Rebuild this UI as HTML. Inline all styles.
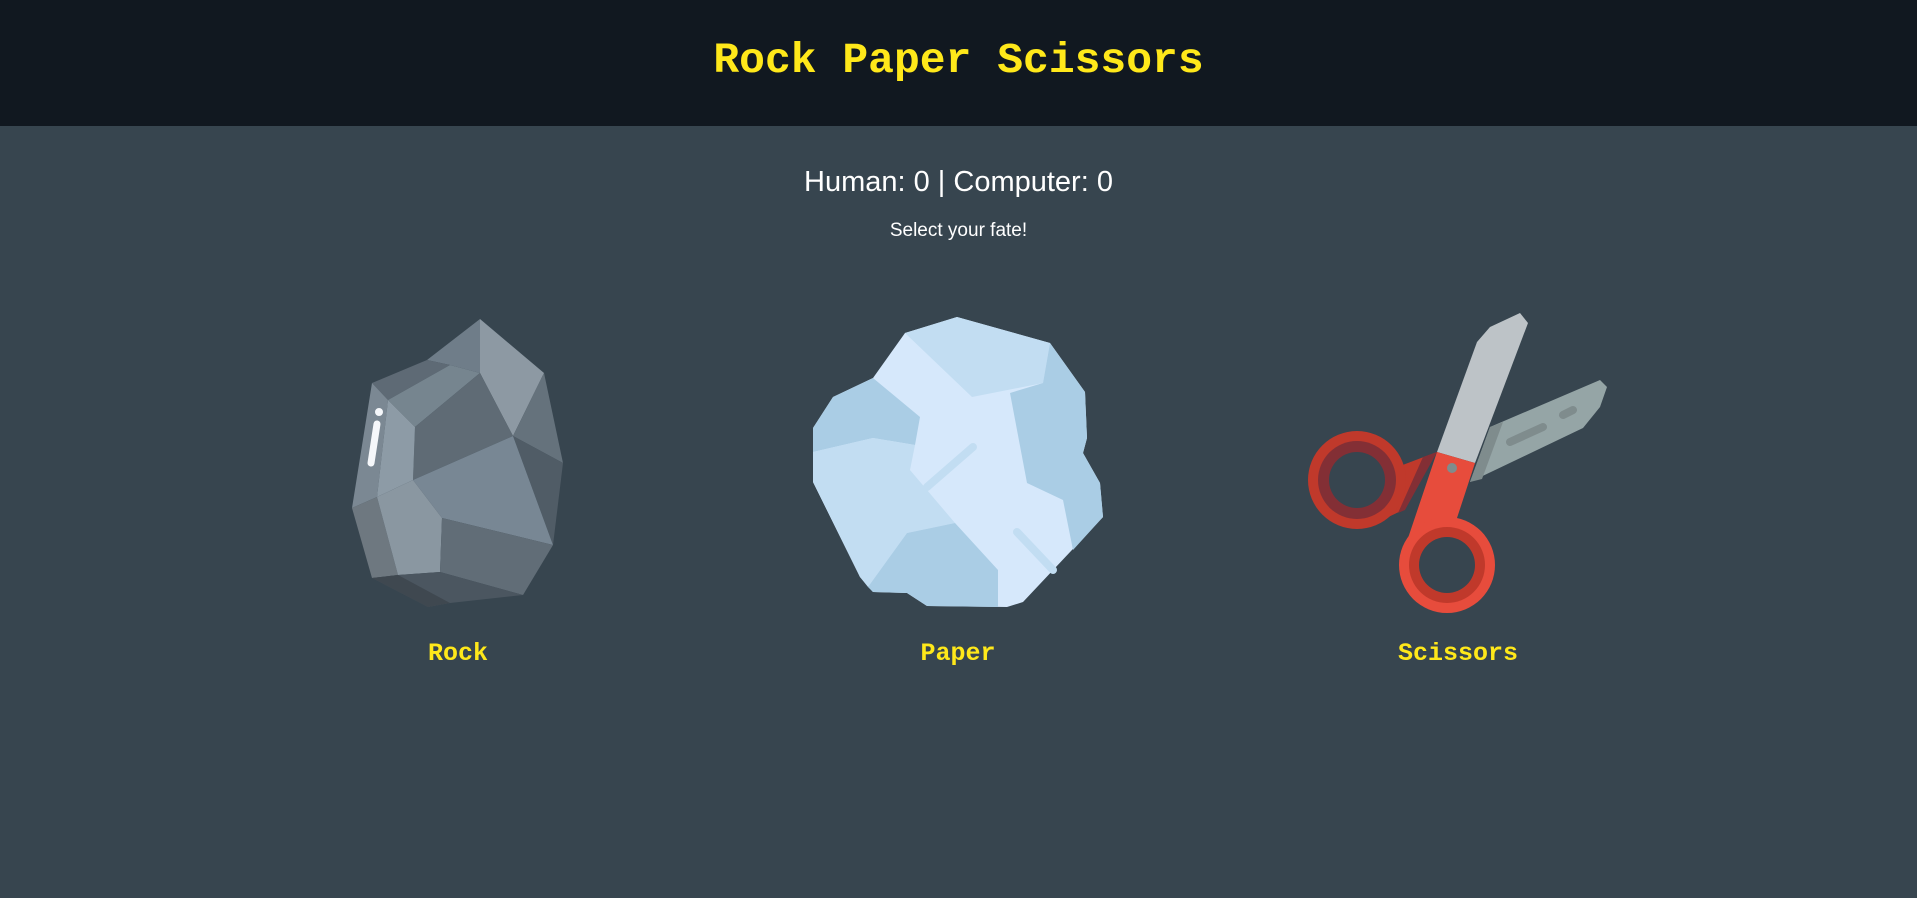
<!DOCTYPE html>
<html><head><meta charset="utf-8"><style>
html,body{margin:0;padding:0;width:1917px;height:898px;overflow:hidden;background:#37454f;font-family:"Liberation Sans",sans-serif}
header{position:absolute;left:0;top:0;width:1917px;height:126px;background:#111820}
.t{position:absolute;left:0;width:1917px;text-align:center;white-space:nowrap}
.px{font-family:"Liberation Mono",monospace;font-weight:bold;color:#ffe81a}
svg{position:absolute;left:0;top:0}
</style></head><body>
<header></header>
<div class="t px" style="top:36px;font-size:43px;line-height:50px">Rock Paper Scissors</div>
<div class="t" style="top:164px;font-size:29px;line-height:36px;color:#fff">Human: 0 | Computer: 0</div>
<div class="t" style="top:219px;font-size:19px;line-height:24px;color:#fff">Select your fate!</div>
<div class="px" style="position:absolute;left:358px;width:200px;text-align:center;top:638px;font-size:25px;line-height:32px">Rock</div>
<div class="px" style="position:absolute;left:858px;width:200px;text-align:center;top:638px;font-size:25px;line-height:32px">Paper</div>
<div class="px" style="position:absolute;left:1358px;width:200px;text-align:center;top:638px;font-size:25px;line-height:32px">Scissors</div>
<svg width="1917" height="898" viewBox="0 0 1917 898">
<!-- rock -->
<polygon points="480,319 544,373 513,436 480,373" fill="#8d99a3"/>
<polygon points="427,360 480,319 480,373 450,365" fill="#6f7d89"/>
<polygon points="372,383 427,360 450,365 388,400" fill="#5e6a75"/>
<polygon points="388,400 450,365 480,373 415,427" fill="#76858f"/>
<polygon points="415,427 480,373 513,436 413,480" fill="#5f6b75"/>
<polygon points="544,373 563,463 513,436" fill="#65727c"/>
<polygon points="513,436 563,463 553,545" fill="#505c66"/>
<polygon points="413,480 513,436 553,545 442,518" fill="#788794"/>
<polygon points="372,383 388,400 377,497 352,508" fill="#7b8893"/>
<polygon points="388,400 415,427 413,480 377,497" fill="#8d9ba6"/>
<polygon points="352,508 377,497 398,575 372,578" fill="#6e7880"/>
<polygon points="377,497 413,480 442,518 440,572 398,575" fill="#8a97a1"/>
<polygon points="442,518 553,545 523,595 440,572" fill="#616d77"/>
<polygon points="372,578 398,575 440,572 523,595 450,603 428,607" fill="#4b5660"/>
<polygon points="372,578 398,575 450,603 428,607" fill="#3f4850"/>
<circle cx="379" cy="412" r="4" fill="#f5f7fa"/>
<line x1="377" y1="424" x2="371" y2="463" stroke="#f5f7fa" stroke-width="7" stroke-linecap="round"/>
<!-- paper -->
<polygon points="905,333 957,317 1050,343 1085,392 1087,438 1083,453 1100,483 1103,517 1023,602 1007,607 927,606 907,593 873,592 860,577 813,482 813,428 833,397 873,378" fill="#d6e8fb"/>
<polygon points="905,333 957,317 1050,343 1043,383 972,397" fill="#c2ddf2"/>
<polygon points="1050,343 1085,392 1087,438 1083,453 1100,483 1103,517 1073,550 1063,500 1027,483 1010,393 1043,383" fill="#aacde5"/>
<polygon points="873,378 920,417 915,445 873,438 813,452 813,428 833,397" fill="#aacde5"/>
<polygon points="813,452 873,438 915,445 910,470 955,523 907,533 868,587 860,577 813,482" fill="#c2ddf2"/>
<polygon points="868,587 907,533 955,523 998,570 998,607 927,606 907,593 873,592" fill="#aacde5"/>
<line x1="973" y1="447" x2="927" y2="487" stroke="#c2ddf2" stroke-width="8" stroke-linecap="round"/>
<line x1="1017" y1="532" x2="1053" y2="570" stroke="#c2ddf2" stroke-width="8" stroke-linecap="round"/>
<!-- scissors -->
<polygon points="1490,427 1600,380 1607,387 1600,407 1583,428 1470,482" fill="#95a5a6"/>
<polygon points="1490,427 1503,422 1482,479 1470,482" fill="#7f8c8d"/>
<line x1="1510" y1="442" x2="1543" y2="427" stroke="#7f8c8d" stroke-width="8" stroke-linecap="round"/>
<line x1="1563" y1="415" x2="1573" y2="410" stroke="#7f8c8d" stroke-width="8" stroke-linecap="round"/>
<polygon points="1400,466 1437,452 1403,510 1378,522" fill="#c0392b"/>
<polygon points="1423,457 1437,452 1405,510 1398,513" fill="#832f35"/>
<circle cx="1357" cy="480" r="49" fill="#c0392b"/>
<circle cx="1357" cy="480" r="39" fill="#832f35"/>
<circle cx="1357" cy="480" r="28" fill="#37454f"/>
<polygon points="1477,342 1490,327 1520,313 1528,323 1475,463 1437,452" fill="#bdc3c7"/>
<polygon points="1437,452 1475,463 1457,518 1447,565 1405,547" fill="#e74c3c"/>
<circle cx="1447" cy="565" r="48" fill="#e74c3c"/>
<circle cx="1447" cy="565" r="38" fill="#c0392b"/>
<circle cx="1447" cy="565" r="28" fill="#37454f"/>
<circle cx="1452" cy="468" r="5" fill="#7f8c8d"/>
</svg>
</body></html>
